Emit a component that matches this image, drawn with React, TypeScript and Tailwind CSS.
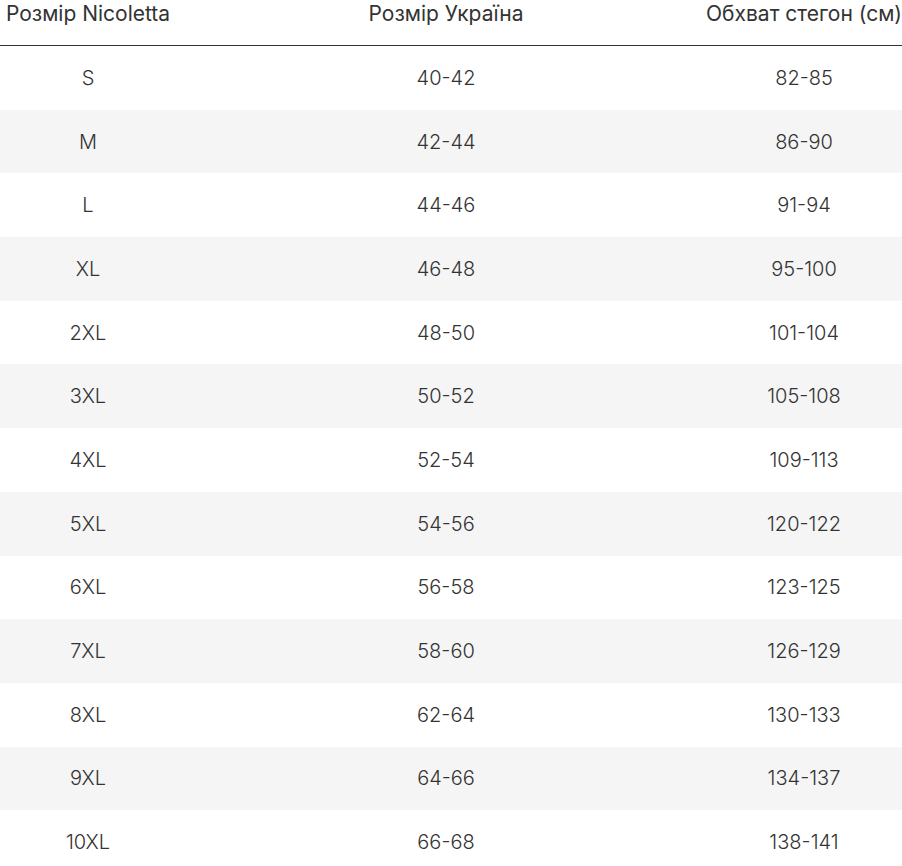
import React from "react";

const rows: [string, string, string][] = [
  ["S", "40-42", "82-85"],
  ["M", "42-44", "86-90"],
  ["L", "44-46", "91-94"],
  ["XL", "46-48", "95-100"],
  ["2XL", "48-50", "101-104"],
  ["3XL", "50-52", "105-108"],
  ["4XL", "52-54", "109-113"],
  ["5XL", "54-56", "120-122"],
  ["6XL", "56-58", "123-125"],
  ["7XL", "58-60", "126-129"],
  ["8XL", "62-64", "130-133"],
  ["9XL", "64-66", "134-137"],
  ["10XL", "66-68", "138-141"],
];

export default function App() {
  return (
    <div className="w-[902px] h-[866px] overflow-hidden bg-white font-['Inter',sans-serif]">
      <div className="grid grid-cols-[176px_540px_176px] h-[46px] items-start pt-[3px] leading-[21px] border-b border-[#333] text-[21px] text-[#333] whitespace-nowrap">
        <div className="flex justify-center">Розмір Nicoletta</div>
        <div className="flex justify-center">Розмір Україна</div>
        <div className="flex justify-center">Обхват стегон (см)</div>
      </div>
      {rows.map((r, i) => (
        <div
          key={r[0]}
          className={`grid grid-cols-[176px_540px_176px] h-[63.7px] items-center text-[20px] font-light text-[#333] ${i % 2 === 1 ? "bg-[#f5f5f5]" : "bg-white"}`}
        >
          <div className="flex justify-center">{r[0]}</div>
          <div className="flex justify-center">{r[1]}</div>
          <div className="flex justify-center">{r[2]}</div>
        </div>
      ))}
    </div>
  );
}
